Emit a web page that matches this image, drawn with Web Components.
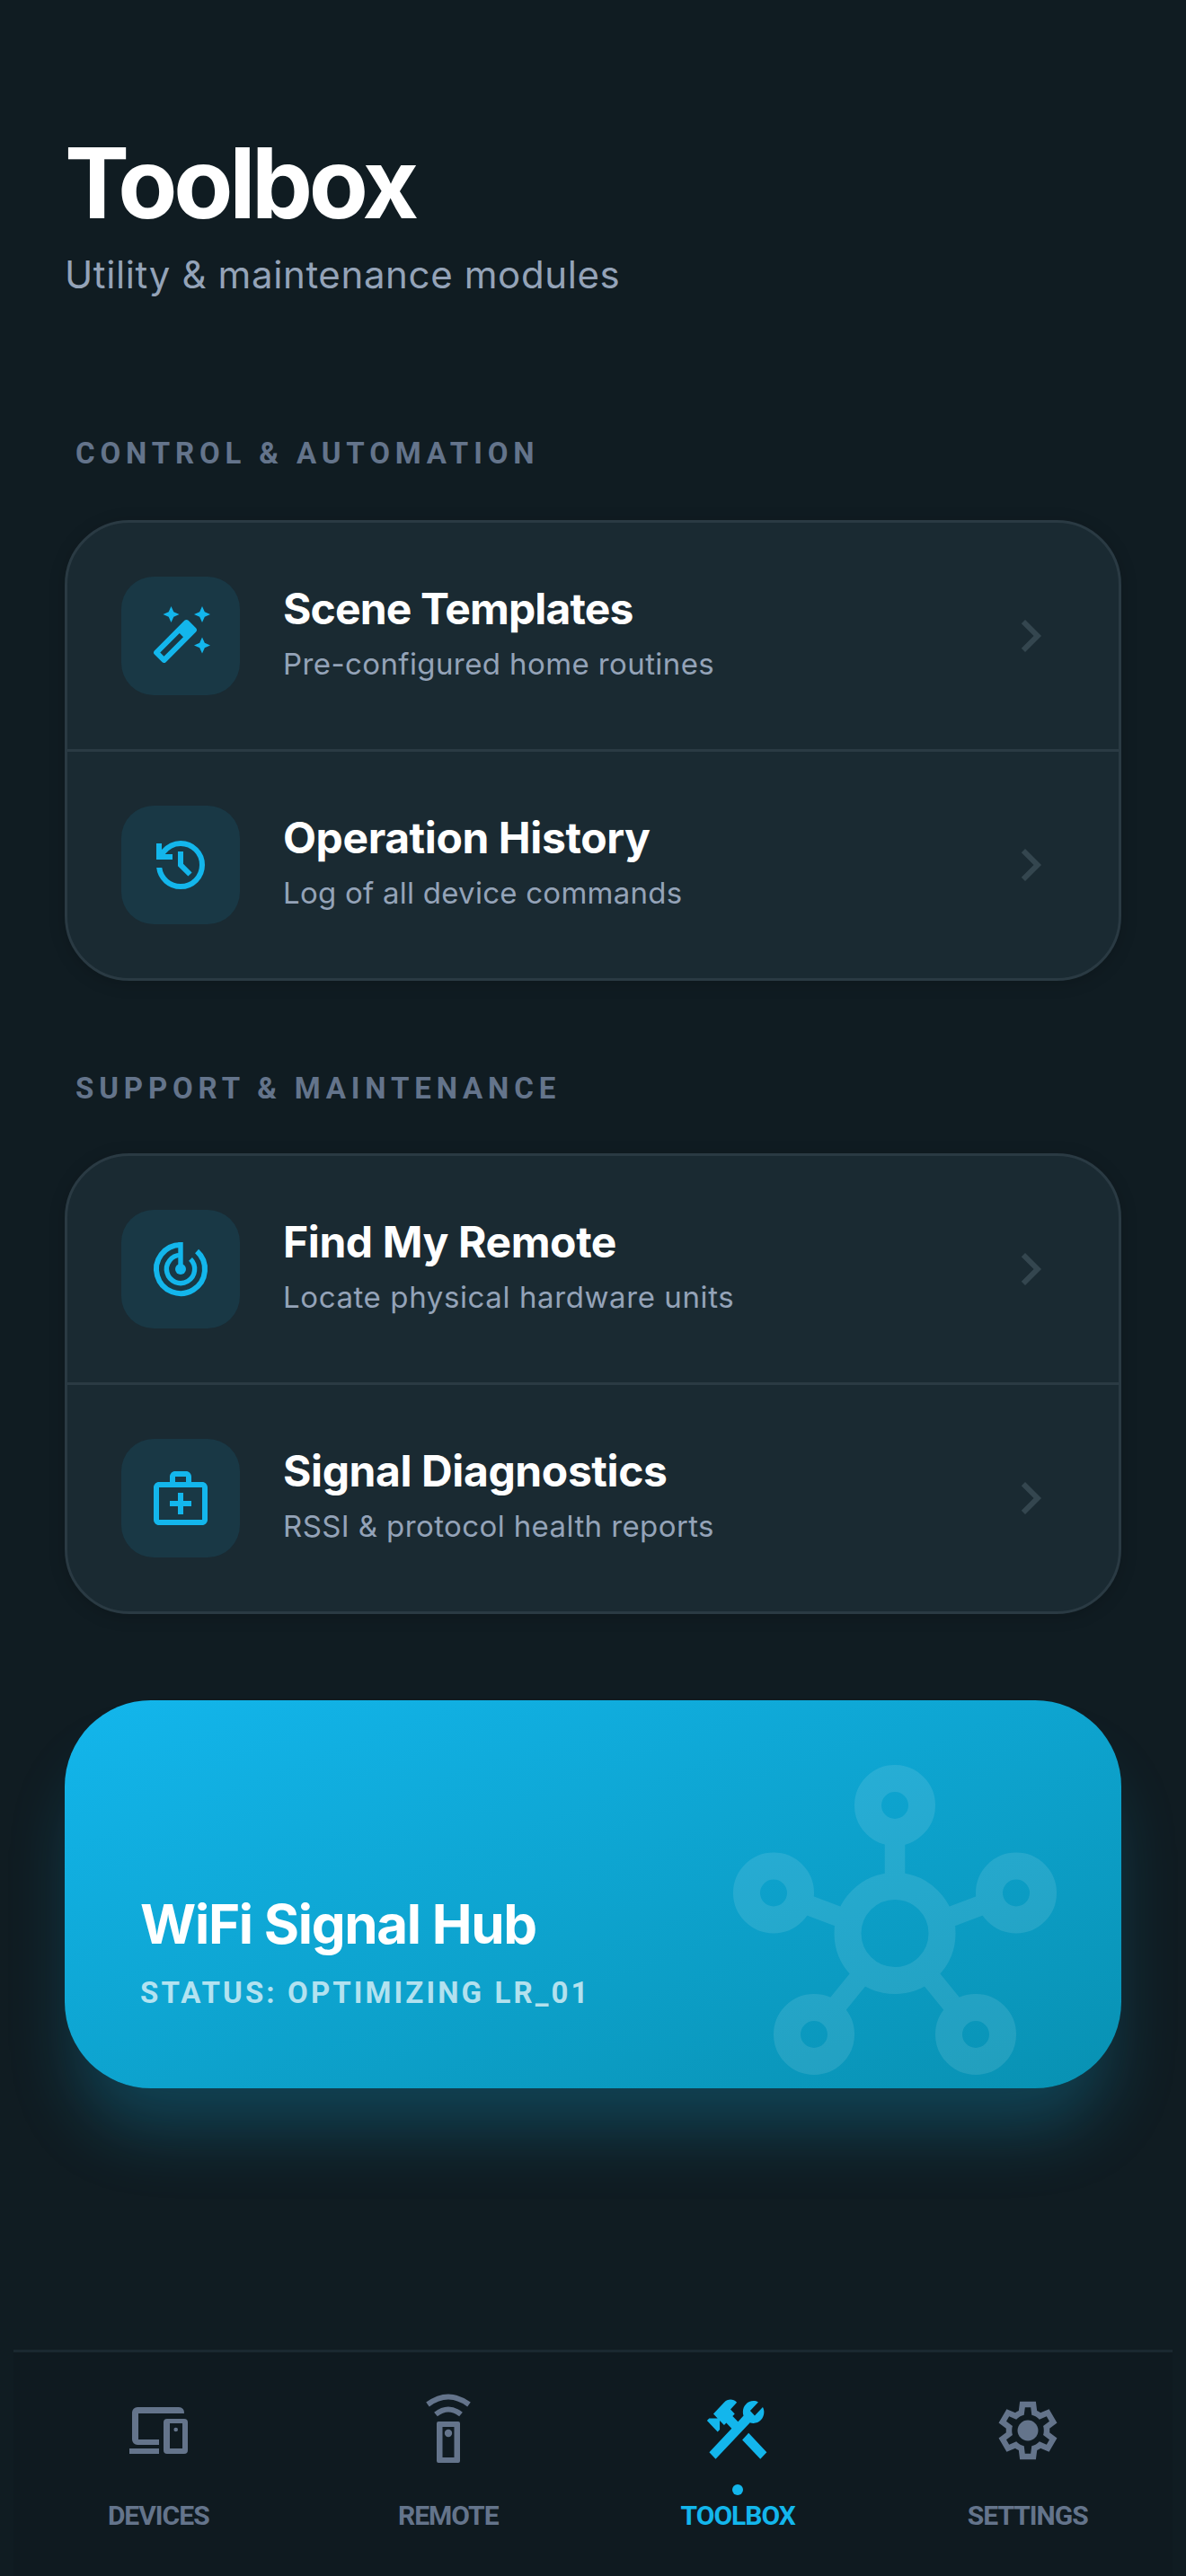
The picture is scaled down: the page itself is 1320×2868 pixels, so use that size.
<!DOCTYPE html>
<html>
<head>
<meta charset="utf-8">
<title>Toolbox</title>
<style>
html, body { margin: 0; padding: 0; background: #101c22; }
body { width: 1320px; height: 2868px; overflow: hidden; font-family: Inter, "Liberation Sans", sans-serif; color: #fff; }
</style>
</head>
<body>
<template id="screen-template">
  <style>
    :host { display: flex; flex-direction: column; width: 1320px; height: 2868px; box-sizing: border-box; }
    .main { flex: 1; padding: 0 72px; display: flex; flex-direction: column; }
  </style>
  <div class="main"><slot></slot></div>
  <slot name="nav"></slot>
</template>

<template id="page-header-template">
  <style>
    :host { display: block; flex: none; padding-top: 144px; height: 487px; box-sizing: border-box; }
    h1 { margin: 0; font-size: 108px; line-height: 120px; font-weight: 700; letter-spacing: -0.04em; color: #fff; }
    p { margin: 15px 0 0; font-size: 42px; line-height: 54px; color: #94a3b8; letter-spacing: 0.62px; }
  </style>
  <h1><slot name="title"></slot></h1>
  <p><slot name="subtitle"></slot></p>
</template>

<template id="section-group-template">
  <style>
    :host { display: block; flex: none; }
    .label { padding: 0 12px; height: 36px; line-height: 36px; margin: 0 0 var(--label-gap, 56px); font-family: Roboto, "Liberation Sans", sans-serif; font-size: 33px; font-weight: 700; letter-spacing: 5.85px; color: #64748b; }
    .card { background: #1a2a32; border: 3px solid #2a3a43; border-radius: 72px; overflow: hidden; box-shadow: 0 3px 18px rgba(0,0,0,.18); }
  </style>
  <div class="label"><slot name="label"></slot></div>
  <div class="card"><slot></slot></div>
</template>

<template id="tool-row-template">
  <style>
    :host { display: flex; align-items: center; padding: 60px; gap: 48px; }
    :host([divided]) { border-bottom: 3px solid #2a3a43; }
    .icon { width: 132px; height: 132px; border-radius: 36px; background: #193845; display: flex; align-items: center; justify-content: center; flex: none; }
    .text { flex: 1; min-width: 0; padding-bottom: 6px; }
    .title { font-size: 48px; line-height: 60px; font-weight: 700; color: #fff; letter-spacing: -0.4px; }
    .sub { font-size: 33px; line-height: 45px; margin-top: 9px; color: #94a3b8; letter-spacing: 0.4px; }
    ::slotted(svg) { display: block; }
    .chev { display: block; fill: #34464f; flex: none; margin-right: 2px; }
  </style>
  <div class="icon"><slot name="icon"></slot></div>
  <div class="text">
    <div class="title"><slot name="title"></slot></div>
    <div class="sub"><slot name="sub"></slot></div>
  </div>
  <svg class="chev" width="72" height="72" viewBox="0 0 24 24"><path d="M10 6 8.59 7.41 13.17 12l-4.58 4.59L10 18l6-6z"/></svg>
</template>

<template id="signal-hub-template">
  <style>
    :host { display: flex; flex: none; flex-direction: column; justify-content: flex-end; position: relative; height: 432px; box-sizing: border-box; padding: 0 84px 85px; border-radius: 96px; background: linear-gradient(to bottom right, #13b6ec, #0891b2); box-shadow: 0 60px 75px -15px rgba(19,182,236,.25); }
    .title { font-size: 60px; line-height: 72px; font-weight: 700; color: #fff; letter-spacing: -1.3px; }
    .status { font-family: Roboto, "Liberation Sans", sans-serif; font-size: 33px; line-height: 42px; margin-top: 20px; font-weight: 700; letter-spacing: 3.1px; color: rgba(255,255,255,.7); }
    svg { position: absolute; top: 72px; right: 72px; opacity: .1; }
  </style>
  <svg width="360" height="360" viewBox="0 0 24 24" fill="none" stroke="#fff" stroke-width="2">
    <path stroke-width="1.5" d="M12 5v5M4.500 10 9 11.700M19.500 10 15 11.700M7 18.700 9.600 15.500M17 18.700 14.400 15.500"/>
    <circle cx="12" cy="3" r="2"/>
    <circle cx="3" cy="9.5" r="2"/>
    <circle cx="21" cy="9.5" r="2"/>
    <circle cx="6" cy="20" r="2"/>
    <circle cx="18" cy="20" r="2"/>
    <circle cx="12" cy="12.5" r="3.5"/>
  </svg>
  <div class="title"><slot name="title"></slot></div>
  <div class="status"><slot name="status"></slot></div>
</template>

<template id="nav-bar-template">
  <style>
    :host { display: grid; flex: none; grid-template-columns: repeat(4, 1fr); margin: 0 15px; height: 252px; box-sizing: border-box; border-top: 3px solid #1a2830; background: #0f1a20; }
  </style>
  <slot></slot>
</template>

<template id="nav-item-template">
  <style>
    :host { display: flex; flex-direction: column; align-items: center; padding-top: 45px; color: #64748b; position: relative; }
    :host([active]) { color: #13b6ec; }
    ::slotted(svg) { display: block; }
    .label { margin-top: 35px; font-family: Roboto, "Liberation Sans", sans-serif; font-size: 30px; line-height: 36px; font-weight: 700; letter-spacing: -1px; }
    .dot { display: none; position: absolute; top: 147px; left: 50%; margin-left: -6px; width: 12px; height: 12px; border-radius: 50%; background: #13b6ec; }
    :host([active]) .dot { display: block; }
  </style>
  <slot name="icon"></slot>
  <span class="dot"></span>
  <span class="label"><slot></slot></span>
</template>

<tool-screen>
  <page-header>
    <span slot="title">Toolbox</span>
    <span slot="subtitle">Utility &amp; maintenance modules</span>
  </page-header>

  <section-group>
    <span slot="label">CONTROL &amp; AUTOMATION</span>
    <tool-row divided>
      <svg slot="icon" width="72" height="72" viewBox="0 0 24 24" fill="#13b6ec"><path d="M20 7l.94-2.06L23 4l-2.06-.94L20 1l-.94 2.06L17 4l2.06.94zM8.5 7l.94-2.06L11.5 4l-2.06-.94L8.5 1l-.94 2.06L5.5 4l2.06.94zM20 12.5l-.94 2.06-2.06.94 2.06.94.94 2.06.94-2.06L23 15.5l-2.06-.94zm-2.29-3.38l-2.83-2.83c-.2-.19-.45-.29-.71-.29-.26 0-.51.1-.71.29L2.29 17.46c-.39.39-.39 1.02 0 1.41l2.83 2.83c.2.2.45.3.71.3s.51-.1.71-.29l11.17-11.17c.39-.39.39-1.03 0-1.42zM5.83 19.59l-1.41-1.41L11.59 11 13 12.41l-7.17 7.18z"/></svg>
      <span slot="title" style="letter-spacing:-0.87px">Scene Templates</span>
      <span slot="sub">Pre-configured home routines</span>
    </tool-row>
    <tool-row>
      <svg slot="icon" width="72" height="72" viewBox="0 -960 960 960" fill="#13b6ec"><path d="M480-120q-138 0-240.5-91.5T122-440h82q14 104 92.5 172T480-200q117 0 198.5-81.5T760-480q0-117-81.5-198.5T480-760q-69 0-129 32t-101 88h110v80H120v-240h80v94q51-64 124.5-99T480-840q150 0 255 105t105 255q0 150-105 255T480-120Zm112-192L440-464v-216h80v184l128 128-56 56Z"/></svg>
      <span slot="title">Operation History</span>
      <span slot="sub" style="letter-spacing:0.25px">Log of all device commands</span>
    </tool-row>
  </section-group>

  <section-group style="margin-top:102px; --label-gap:54px">
    <span slot="label">SUPPORT &amp; MAINTENANCE</span>
    <tool-row divided>
      <svg slot="icon" width="72" height="72" viewBox="0 0 24 24" fill="none" stroke="#13b6ec" stroke-width="2"><path d="M12 3A9 9 0 1 0 18.03 5.31"/><path stroke-width="1.8" d="M12 6.8A5.2 5.2 0 1 0 15.68 8.32"/><path stroke-width="1.8" d="M12 2v10"/><circle cx="12" cy="12" r="2" fill="#13b6ec" stroke="none"/></svg>
      <span slot="title">Find My Remote</span>
      <span slot="sub" style="letter-spacing:0.6px">Locate physical hardware units</span>
    </tool-row>
    <tool-row>
      <svg slot="icon" width="72" height="72" viewBox="0 0 24 24" fill="#13b6ec"><path d="M20 6h-4V4c0-1.1-.9-2-2-2h-4c-1.1 0-2 .9-2 2v2H4c-1.1 0-2 .9-2 2v12c0 1.1.9 2 2 2h16c1.1 0 2-.9 2-2V8c0-1.1-.9-2-2-2zM10 4h4v2h-4V4zm10 16H4V8h16v12z"/><path d="M13 10h-2v3H8v2h3v3h2v-3h3v-2h-3z"/></svg>
      <span slot="title">Signal Diagnostics</span>
      <span slot="sub">RSSI &amp; protocol health reports</span>
    </tool-row>
  </section-group>

  <signal-hub style="margin-top:96px">
    <span slot="title">WiFi Signal Hub</span>
    <span slot="status">STATUS: OPTIMIZING LR_01</span>
  </signal-hub>

  <nav-bar slot="nav">
    <nav-item>
      <svg slot="icon" width="84" height="84" viewBox="0 0 84 84" fill="currentColor" fill-rule="evenodd"><path d="M19 16H65a6 6 0 0 1 6 7H20v29h23v6H19a6 6 0 0 1-6-6V22a6 6 0 0 1 6-6zM10 62h33v6H10zM52 29h19a4 4 0 0 1 4 4v31a4 4 0 0 1-4 4H52a4 4 0 0 1-4-4V33a4 4 0 0 1 4-4zm3 5v28h14V34z"/><circle cx="61.7" cy="41" r="2.300"/></svg>
      DEVICES
    </nav-item>
    <nav-item>
      <svg slot="icon" width="84" height="84" viewBox="0 0 84 84" fill="currentColor" fill-rule="evenodd"><path d="M31 32h22a2 2 0 0 1 2 2v42a2 2 0 0 1-2 2H31a2 2 0 0 1-2-2V34a2 2 0 0 1 2-2zm4.500 6v34h13V38z"/><circle cx="42" cy="45" r="4.200"/><path fill="none" stroke="currentColor" stroke-width="6" d="M19 13Q42 -4 65 13M28 24Q42 13 56 24"/></svg>
      REMOTE
    </nav-item>
    <nav-item active>
      <svg slot="icon" width="84" height="84" viewBox="0 0 84 84" fill="currentColor"><g transform="translate(0.800 -2) scale(3.360 3.560)"><path d="M13.780 15.300 19.780 21.300 21.890 19.140 15.890 13.140 13.780 15.300ZM17.500 10.100c-.39 0-.81-.05-1.140-.19L4.970 21.250 2.860 19.140 10.270 11.740 8.500 9.960 7.780 10.660 6.330 9.250V12.110L5.630 12.810 2.110 9.250 2.810 8.550H5.620L4.220 7.140 7.780 3.580C8.950 2.410 10.830 2.410 12 3.580L9.890 5.740 11.300 7.140 10.590 7.850 12.380 9.630 14.200 7.750C14.060 7.420 14 7 14 6.630 14 4.660 15.560 3.110 17.500 3.110 18.090 3.110 18.610 3.250 19.080 3.530L16.410 6.200 17.910 7.700 20.580 5.030C20.860 5.500 21 6 21 6.630 21 8.550 19.450 10.100 17.500 10.100Z"/></g></svg>
      TOOLBOX
    </nav-item>
    <nav-item>
      <svg slot="icon" width="84" height="84" viewBox="-40 -1000 1040 1040" fill="currentColor" fill-rule="evenodd"><path d="m370-80-16-128q-13-5-24.500-12T307-235l-119 50L78-375l103-78q-1-7-1-13.500v-27q0-6.500 1-13.500L78-585l110-190 119 50q11-8 23-15t24-12l16-128h220l16 128q13 5 24.500 12t22.500 15l119-50 110 190-103 78q1 7 1 13.500v27q0 6.500-1 13.500l103 78-110 190-118-50q-11 8-23 15t-24 12L590-80H370Zm70-80h79l14-106q31-8 57.500-23.500T639-327l99 41 39-68-86-65q5-14 7-29.500t2-31.500q0-16-2-31.500t-7-29.500l86-65-39-68-99 42q-22-23-48.500-38.500T533-694l-13-106h-79l-14 106q-31 8-57.500 23.500T321-633l-99-41-39 68 86 64q-5 15-7 30t-2 32q0 16 2 31t7 30l-86 65 39 68 99-42q22 23 48.500 38.500T427-266l13 106Z"/><circle cx="480" cy="-480" r="142"/></svg>
      SETTINGS
    </nav-item>
  </nav-bar>
</tool-screen>

<script>
function defineFromTemplate(tag, templateId) {
  const template = document.getElementById(templateId);
  customElements.define(tag, class extends HTMLElement {
    constructor() {
      super();
      this.attachShadow({ mode: 'open' });
      this.shadowRoot.appendChild(template.content.cloneNode(true));
    }
  });
}

defineFromTemplate('tool-screen', 'screen-template');
defineFromTemplate('page-header', 'page-header-template');
defineFromTemplate('section-group', 'section-group-template');
defineFromTemplate('tool-row', 'tool-row-template');
defineFromTemplate('signal-hub', 'signal-hub-template');
defineFromTemplate('nav-bar', 'nav-bar-template');
defineFromTemplate('nav-item', 'nav-item-template');
</script>
</body>
</html>
